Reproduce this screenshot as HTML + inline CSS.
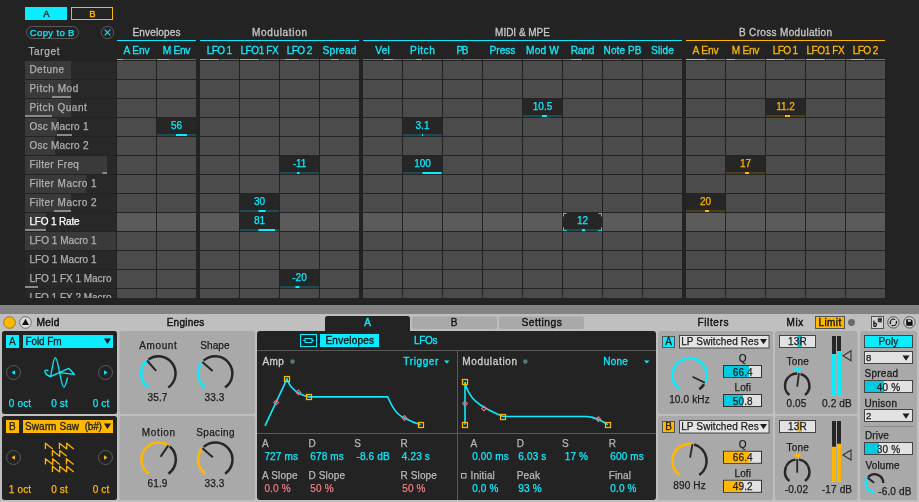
<!DOCTYPE html>
<html><head><meta charset="utf-8"><style>
html,body{margin:0;padding:0;background:#202020;width:919px;height:502px;overflow:hidden}
svg{display:block;will-change:transform}
text{font-family:"Liberation Sans", sans-serif}
.m{letter-spacing:0.15px}
</style></head><body>
<svg width="919" height="502" viewBox="0 0 919 502">
<rect x="0" y="0" width="919" height="305" fill="#232323" />
<rect x="25" y="7" width="42" height="13" fill="#0aecff" />
<text x="46.3" y="16.9" font-size="9.5" fill="#1a1a1a" stroke="#1a1a1a" stroke-width="0.35" text-anchor="middle" >A</text>
<rect x="71.5" y="7.5" width="41" height="12" fill="none" stroke="#ffb700" stroke-width="1"/>
<text x="92.3" y="16.9" font-size="9.5" fill="#ffb700" stroke="#ffb700" stroke-width="0.35" text-anchor="middle" >B</text>
<rect x="26.5" y="26.5" width="52" height="12" fill="none" rx="6" stroke="#5a5a5a" stroke-width="1"/>
<text x="52.1" y="35.8" font-size="9.6" fill="#0aecff" stroke="#0aecff" stroke-width="0.25" text-anchor="middle"  textLength="44.6" lengthAdjust="spacing">Copy to B</text>
<circle cx="107.5" cy="32.5" r="6.2" fill="none" stroke="#5a5a5a" stroke-width="1"/>
<path d="M104.7 29.7 L110.3 35.3 M110.3 29.7 L104.7 35.3" stroke="#0aecff" stroke-width="1.1" fill="none" />
<text x="28.4" y="55" font-size="10" fill="#b4b4b4" stroke="#b4b4b4" stroke-width="0.25" text-anchor="start"  textLength="31.2" lengthAdjust="spacing">Target</text>
<rect x="117" y="40" width="79" height="1" fill="#0aecff" />
<text x="156.5" y="36" font-size="10" fill="#c8c8c8" stroke="#c8c8c8" stroke-width="0.3" text-anchor="middle"  textLength="48.1" lengthAdjust="spacing">Envelopes</text>
<text x="136.5" y="54" font-size="10.2" fill="#0aecff" stroke="#0aecff" stroke-width="0.3" text-anchor="middle"  textLength="26.2" lengthAdjust="spacing">A Env</text>
<text x="176.5" y="54" font-size="10.2" fill="#0aecff" stroke="#0aecff" stroke-width="0.3" text-anchor="middle"  textLength="27.7" lengthAdjust="spacing">M Env</text>
<rect x="200" y="40" width="159" height="1" fill="#0aecff" />
<text x="279.5" y="36" font-size="10" fill="#c8c8c8" stroke="#c8c8c8" stroke-width="0.3" text-anchor="middle"  textLength="54.9" lengthAdjust="spacing">Modulation</text>
<text x="219.5" y="54" font-size="10" fill="#0aecff" stroke="#0aecff" stroke-width="0.3" text-anchor="middle"  textLength="25.3" lengthAdjust="spacing">LFO 1</text>
<text x="259.5" y="54" font-size="10" fill="#0aecff" stroke="#0aecff" stroke-width="0.3" text-anchor="middle"  textLength="38.1" lengthAdjust="spacing">LFO1 FX</text>
<text x="299.5" y="54" font-size="10" fill="#0aecff" stroke="#0aecff" stroke-width="0.3" text-anchor="middle"  textLength="25.5" lengthAdjust="spacing">LFO 2</text>
<text x="339.5" y="54" font-size="10.2" fill="#0aecff" stroke="#0aecff" stroke-width="0.3" text-anchor="middle"  textLength="34" lengthAdjust="spacing">Spread</text>
<rect x="363" y="40" width="319" height="1" fill="#0aecff" />
<text x="522.5" y="36" font-size="10" fill="#c8c8c8" stroke="#c8c8c8" stroke-width="0.3" text-anchor="middle"  textLength="54.8" lengthAdjust="spacing">MIDI &amp; MPE</text>
<text x="382.5" y="54" font-size="10.2" fill="#0aecff" stroke="#0aecff" stroke-width="0.3" text-anchor="middle"  textLength="14.4" lengthAdjust="spacing">Vel</text>
<text x="422.5" y="54" font-size="10.2" fill="#0aecff" stroke="#0aecff" stroke-width="0.3" text-anchor="middle"  textLength="24.8" lengthAdjust="spacing">Pitch</text>
<text x="462.5" y="54" font-size="10" fill="#0aecff" stroke="#0aecff" stroke-width="0.3" text-anchor="middle"  textLength="12" lengthAdjust="spacing">PB</text>
<text x="502.5" y="54" font-size="10.2" fill="#0aecff" stroke="#0aecff" stroke-width="0.3" text-anchor="middle"  textLength="25.9" lengthAdjust="spacing">Press</text>
<text x="542.5" y="54" font-size="10.2" fill="#0aecff" stroke="#0aecff" stroke-width="0.3" text-anchor="middle"  textLength="32.9" lengthAdjust="spacing">Mod W</text>
<text x="582.5" y="54" font-size="10.2" fill="#0aecff" stroke="#0aecff" stroke-width="0.3" text-anchor="middle"  textLength="23.7" lengthAdjust="spacing">Rand</text>
<text x="622.5" y="54" font-size="10" fill="#0aecff" stroke="#0aecff" stroke-width="0.3" text-anchor="middle"  textLength="37.8" lengthAdjust="spacing">Note PB</text>
<text x="662.5" y="54" font-size="10.2" fill="#0aecff" stroke="#0aecff" stroke-width="0.3" text-anchor="middle"  textLength="23" lengthAdjust="spacing">Slide</text>
<rect x="686" y="40" width="199" height="1" fill="#ffb700" />
<text x="785.5" y="36" font-size="10" fill="#c8c8c8" stroke="#c8c8c8" stroke-width="0.3" text-anchor="middle"  textLength="93" lengthAdjust="spacing">B Cross Modulation</text>
<text x="705.5" y="54" font-size="10.2" fill="#ffb700" stroke="#ffb700" stroke-width="0.3" text-anchor="middle"  textLength="26.2" lengthAdjust="spacing">A Env</text>
<text x="745.5" y="54" font-size="10.2" fill="#ffb700" stroke="#ffb700" stroke-width="0.3" text-anchor="middle"  textLength="27.7" lengthAdjust="spacing">M Env</text>
<text x="785.5" y="54" font-size="10" fill="#ffb700" stroke="#ffb700" stroke-width="0.3" text-anchor="middle"  textLength="25.3" lengthAdjust="spacing">LFO 1</text>
<text x="825.5" y="54" font-size="10" fill="#ffb700" stroke="#ffb700" stroke-width="0.3" text-anchor="middle"  textLength="38.1" lengthAdjust="spacing">LFO1 FX</text>
<text x="865.5" y="54" font-size="10" fill="#ffb700" stroke="#ffb700" stroke-width="0.3" text-anchor="middle"  textLength="25.5" lengthAdjust="spacing">LFO 2</text>
<rect x="117" y="59" width="39" height="1" fill="#0f919c" />
<rect x="117" y="59" width="6" height="1" fill="#0aecff" />
<rect x="157" y="59" width="39" height="1" fill="#0f919c" />
<rect x="157" y="59" width="12" height="1" fill="#0aecff" />
<rect x="200" y="59" width="19" height="1" fill="#0f919c" />
<rect x="220" y="59" width="19" height="1" fill="#0f919c" />
<rect x="200" y="59" width="19" height="1" fill="#0aecff" />
<rect x="240" y="59" width="19" height="1" fill="#0f919c" />
<rect x="260" y="59" width="19" height="1" fill="#0f919c" />
<rect x="240" y="59" width="19" height="1" fill="#0aecff" />
<rect x="280" y="59" width="19" height="1" fill="#0f919c" />
<rect x="300" y="59" width="19" height="1" fill="#0f919c" />
<rect x="285" y="59" width="14" height="1" fill="#0aecff" />
<rect x="320" y="59" width="19" height="1" fill="#0f919c" />
<rect x="340" y="59" width="19" height="1" fill="#0f919c" />
<rect x="331" y="59" width="8" height="1" fill="#0aecff" />
<rect x="363" y="59" width="19" height="1" fill="#0f919c" />
<rect x="383" y="59" width="19" height="1" fill="#0f919c" />
<rect x="383" y="59" width="10" height="1" fill="#0aecff" />
<rect x="403" y="59" width="19" height="1" fill="#0f919c" />
<rect x="423" y="59" width="19" height="1" fill="#0f919c" />
<rect x="416" y="59" width="6" height="1" fill="#0aecff" />
<rect x="443" y="59" width="19" height="1" fill="#0f919c" />
<rect x="463" y="59" width="19" height="1" fill="#0f919c" />
<rect x="483" y="59" width="39" height="1" fill="#0f919c" />
<rect x="523" y="59" width="39" height="1" fill="#0f919c" />
<rect x="563" y="59" width="19" height="1" fill="#0f919c" />
<rect x="583" y="59" width="19" height="1" fill="#0f919c" />
<rect x="571" y="59" width="11" height="1" fill="#0aecff" />
<rect x="603" y="59" width="19" height="1" fill="#0f919c" />
<rect x="623" y="59" width="19" height="1" fill="#0f919c" />
<rect x="643" y="59" width="39" height="1" fill="#0f919c" />
<rect x="686" y="59" width="39" height="1" fill="#a8780a" />
<rect x="686" y="59" width="20" height="1" fill="#ffb700" />
<rect x="726" y="59" width="39" height="1" fill="#a8780a" />
<rect x="726" y="59" width="9" height="1" fill="#ffb700" />
<rect x="766" y="59" width="19" height="1" fill="#a8780a" />
<rect x="786" y="59" width="19" height="1" fill="#a8780a" />
<rect x="766" y="59" width="19" height="1" fill="#ffb700" />
<rect x="806" y="59" width="19" height="1" fill="#a8780a" />
<rect x="826" y="59" width="19" height="1" fill="#a8780a" />
<rect x="806" y="59" width="19" height="1" fill="#ffb700" />
<rect x="846" y="59" width="19" height="1" fill="#a8780a" />
<rect x="866" y="59" width="19" height="1" fill="#a8780a" />
<rect x="851" y="59" width="14" height="1" fill="#ffb700" />
<clipPath id="mc"><rect x="0" y="0" width="919" height="298"/></clipPath>
<g clip-path="url(#mc)">
<rect x="25" y="61" width="91" height="18" fill="#282828" />
<rect x="25" y="61" width="46" height="18" fill="#3a3a3a" />
<text x="29.4" y="73.2" font-size="10" fill="#b0b0b0" stroke="#b0b0b0" stroke-width="0.25" text-anchor="start"  textLength="34.7" lengthAdjust="spacing">Detune</text>
<rect x="117" y="61" width="39" height="18" fill="#4b4b4b" />
<rect x="157" y="61" width="39" height="18" fill="#4b4b4b" />
<rect x="200" y="61" width="39" height="18" fill="#4b4b4b" />
<rect x="240" y="61" width="39" height="18" fill="#4b4b4b" />
<rect x="280" y="61" width="39" height="18" fill="#4b4b4b" />
<rect x="320" y="61" width="39" height="18" fill="#4b4b4b" />
<rect x="363" y="61" width="39" height="18" fill="#4b4b4b" />
<rect x="403" y="61" width="39" height="18" fill="#4b4b4b" />
<rect x="443" y="61" width="39" height="18" fill="#4b4b4b" />
<rect x="483" y="61" width="39" height="18" fill="#4b4b4b" />
<rect x="523" y="61" width="39" height="18" fill="#4b4b4b" />
<rect x="563" y="61" width="39" height="18" fill="#4b4b4b" />
<rect x="603" y="61" width="39" height="18" fill="#4b4b4b" />
<rect x="643" y="61" width="39" height="18" fill="#4b4b4b" />
<rect x="686" y="61" width="39" height="18" fill="#4b4b4b" />
<rect x="726" y="61" width="39" height="18" fill="#4b4b4b" />
<rect x="766" y="61" width="39" height="18" fill="#4b4b4b" />
<rect x="806" y="61" width="39" height="18" fill="#4b4b4b" />
<rect x="846" y="61" width="39" height="18" fill="#4b4b4b" />
<rect x="25" y="80" width="91" height="18" fill="#282828" />
<rect x="25" y="80" width="46" height="18" fill="#3a3a3a" />
<rect x="52" y="96" width="19" height="2" fill="#8a8a8a" />
<text x="29.4" y="92.2" font-size="10" fill="#b0b0b0" stroke="#b0b0b0" stroke-width="0.25" text-anchor="start"  textLength="48.8" lengthAdjust="spacing">Pitch Mod</text>
<rect x="117" y="80" width="39" height="18" fill="#4b4b4b" />
<rect x="157" y="80" width="39" height="18" fill="#4b4b4b" />
<rect x="200" y="80" width="39" height="18" fill="#4b4b4b" />
<rect x="240" y="80" width="39" height="18" fill="#4b4b4b" />
<rect x="280" y="80" width="39" height="18" fill="#4b4b4b" />
<rect x="320" y="80" width="39" height="18" fill="#4b4b4b" />
<rect x="363" y="80" width="39" height="18" fill="#4b4b4b" />
<rect x="403" y="80" width="39" height="18" fill="#4b4b4b" />
<rect x="443" y="80" width="39" height="18" fill="#4b4b4b" />
<rect x="483" y="80" width="39" height="18" fill="#4b4b4b" />
<rect x="523" y="80" width="39" height="18" fill="#4b4b4b" />
<rect x="563" y="80" width="39" height="18" fill="#4b4b4b" />
<rect x="603" y="80" width="39" height="18" fill="#4b4b4b" />
<rect x="643" y="80" width="39" height="18" fill="#4b4b4b" />
<rect x="686" y="80" width="39" height="18" fill="#4b4b4b" />
<rect x="726" y="80" width="39" height="18" fill="#4b4b4b" />
<rect x="766" y="80" width="39" height="18" fill="#4b4b4b" />
<rect x="806" y="80" width="39" height="18" fill="#4b4b4b" />
<rect x="846" y="80" width="39" height="18" fill="#4b4b4b" />
<rect x="25" y="99" width="91" height="18" fill="#282828" />
<rect x="25" y="99" width="46" height="18" fill="#3a3a3a" />
<rect x="25" y="115" width="27" height="2" fill="#8a8a8a" />
<text x="29.4" y="111.2" font-size="10" fill="#b0b0b0" stroke="#b0b0b0" stroke-width="0.25" text-anchor="start"  textLength="57.4" lengthAdjust="spacing">Pitch Quant</text>
<rect x="117" y="99" width="39" height="18" fill="#4b4b4b" />
<rect x="157" y="99" width="39" height="18" fill="#4b4b4b" />
<rect x="200" y="99" width="39" height="18" fill="#4b4b4b" />
<rect x="240" y="99" width="39" height="18" fill="#4b4b4b" />
<rect x="280" y="99" width="39" height="18" fill="#4b4b4b" />
<rect x="320" y="99" width="39" height="18" fill="#4b4b4b" />
<rect x="363" y="99" width="39" height="18" fill="#4b4b4b" />
<rect x="403" y="99" width="39" height="18" fill="#4b4b4b" />
<rect x="443" y="99" width="39" height="18" fill="#4b4b4b" />
<rect x="483" y="99" width="39" height="18" fill="#4b4b4b" />
<rect x="523" y="99" width="39" height="18" fill="#262626" />
<rect x="523" y="115" width="39" height="2" fill="#1d4d53" />
<rect x="542" y="115" width="5" height="2" fill="#0aecff" />
<text x="542.5" y="110.1" font-size="10" fill="#0aecff" stroke="#0aecff" stroke-width="0.25" text-anchor="middle" >10.5</text>
<rect x="563" y="99" width="39" height="18" fill="#4b4b4b" />
<rect x="603" y="99" width="39" height="18" fill="#4b4b4b" />
<rect x="643" y="99" width="39" height="18" fill="#4b4b4b" />
<rect x="686" y="99" width="39" height="18" fill="#4b4b4b" />
<rect x="726" y="99" width="39" height="18" fill="#4b4b4b" />
<rect x="766" y="99" width="39" height="18" fill="#262626" />
<rect x="766" y="115" width="39" height="2" fill="#4e3e1a" />
<rect x="785" y="115" width="5" height="2" fill="#ffb700" />
<text x="785.5" y="110.1" font-size="10" fill="#ffb700" stroke="#ffb700" stroke-width="0.25" text-anchor="middle" >11.2</text>
<rect x="806" y="99" width="39" height="18" fill="#4b4b4b" />
<rect x="846" y="99" width="39" height="18" fill="#4b4b4b" />
<rect x="25" y="118" width="91" height="18" fill="#282828" />
<rect x="25" y="118" width="32" height="18" fill="#3a3a3a" />
<rect x="57" y="134" width="15" height="2" fill="#8a8a8a" />
<text x="29.4" y="130.2" font-size="10" fill="#b0b0b0" stroke="#b0b0b0" stroke-width="0.25" text-anchor="start"  textLength="59.1" lengthAdjust="spacing">Osc Macro 1</text>
<rect x="117" y="118" width="39" height="18" fill="#4b4b4b" />
<rect x="157" y="118" width="39" height="18" fill="#262626" />
<rect x="157" y="134" width="39" height="2" fill="#1d4d53" />
<rect x="176" y="134" width="11" height="2" fill="#0aecff" />
<text x="176.5" y="129.1" font-size="10" fill="#0aecff" stroke="#0aecff" stroke-width="0.25" text-anchor="middle" >56</text>
<rect x="200" y="118" width="39" height="18" fill="#4b4b4b" />
<rect x="240" y="118" width="39" height="18" fill="#4b4b4b" />
<rect x="280" y="118" width="39" height="18" fill="#4b4b4b" />
<rect x="320" y="118" width="39" height="18" fill="#4b4b4b" />
<rect x="363" y="118" width="39" height="18" fill="#4b4b4b" />
<rect x="403" y="118" width="39" height="18" fill="#262626" />
<rect x="403" y="134" width="39" height="2" fill="#1d4d53" />
<rect x="422" y="134" width="1" height="2" fill="#0aecff" />
<text x="422.5" y="129.1" font-size="10" fill="#0aecff" stroke="#0aecff" stroke-width="0.25" text-anchor="middle" >3.1</text>
<rect x="443" y="118" width="39" height="18" fill="#4b4b4b" />
<rect x="483" y="118" width="39" height="18" fill="#4b4b4b" />
<rect x="523" y="118" width="39" height="18" fill="#4b4b4b" />
<rect x="563" y="118" width="39" height="18" fill="#4b4b4b" />
<rect x="603" y="118" width="39" height="18" fill="#4b4b4b" />
<rect x="643" y="118" width="39" height="18" fill="#4b4b4b" />
<rect x="686" y="118" width="39" height="18" fill="#4b4b4b" />
<rect x="726" y="118" width="39" height="18" fill="#4b4b4b" />
<rect x="766" y="118" width="39" height="18" fill="#4b4b4b" />
<rect x="806" y="118" width="39" height="18" fill="#4b4b4b" />
<rect x="846" y="118" width="39" height="18" fill="#4b4b4b" />
<rect x="25" y="137" width="91" height="18" fill="#282828" />
<rect x="25" y="137" width="30" height="18" fill="#3a3a3a" />
<text x="29.4" y="149.2" font-size="10" fill="#b0b0b0" stroke="#b0b0b0" stroke-width="0.25" text-anchor="start"  textLength="59.1" lengthAdjust="spacing">Osc Macro 2</text>
<rect x="117" y="137" width="39" height="18" fill="#4b4b4b" />
<rect x="157" y="137" width="39" height="18" fill="#4b4b4b" />
<rect x="200" y="137" width="39" height="18" fill="#4b4b4b" />
<rect x="240" y="137" width="39" height="18" fill="#4b4b4b" />
<rect x="280" y="137" width="39" height="18" fill="#4b4b4b" />
<rect x="320" y="137" width="39" height="18" fill="#4b4b4b" />
<rect x="363" y="137" width="39" height="18" fill="#4b4b4b" />
<rect x="403" y="137" width="39" height="18" fill="#4b4b4b" />
<rect x="443" y="137" width="39" height="18" fill="#4b4b4b" />
<rect x="483" y="137" width="39" height="18" fill="#4b4b4b" />
<rect x="523" y="137" width="39" height="18" fill="#4b4b4b" />
<rect x="563" y="137" width="39" height="18" fill="#4b4b4b" />
<rect x="603" y="137" width="39" height="18" fill="#4b4b4b" />
<rect x="643" y="137" width="39" height="18" fill="#4b4b4b" />
<rect x="686" y="137" width="39" height="18" fill="#4b4b4b" />
<rect x="726" y="137" width="39" height="18" fill="#4b4b4b" />
<rect x="766" y="137" width="39" height="18" fill="#4b4b4b" />
<rect x="806" y="137" width="39" height="18" fill="#4b4b4b" />
<rect x="846" y="137" width="39" height="18" fill="#4b4b4b" />
<rect x="25" y="156" width="91" height="18" fill="#282828" />
<rect x="25" y="156" width="82" height="18" fill="#3a3a3a" />
<rect x="102.5" y="172" width="4.5" height="2" fill="#8a8a8a" />
<text x="29.4" y="168.2" font-size="10" fill="#b0b0b0" stroke="#b0b0b0" stroke-width="0.25" text-anchor="start"  textLength="49.5" lengthAdjust="spacing">Filter Freq</text>
<rect x="117" y="156" width="39" height="18" fill="#4b4b4b" />
<rect x="157" y="156" width="39" height="18" fill="#4b4b4b" />
<rect x="200" y="156" width="39" height="18" fill="#4b4b4b" />
<rect x="240" y="156" width="39" height="18" fill="#4b4b4b" />
<rect x="280" y="156" width="39" height="18" fill="#262626" />
<rect x="280" y="172" width="39" height="2" fill="#1d4d53" />
<rect x="297" y="172" width="2.5" height="2" fill="#0aecff" />
<text x="299.5" y="167.1" font-size="10" fill="#0aecff" stroke="#0aecff" stroke-width="0.25" text-anchor="middle" >-11</text>
<rect x="320" y="156" width="39" height="18" fill="#4b4b4b" />
<rect x="363" y="156" width="39" height="18" fill="#4b4b4b" />
<rect x="403" y="156" width="39" height="18" fill="#262626" />
<rect x="403" y="172" width="39" height="2" fill="#1d4d53" />
<rect x="422.5" y="172" width="19.0" height="2" fill="#0aecff" />
<text x="422.5" y="167.1" font-size="10" fill="#0aecff" stroke="#0aecff" stroke-width="0.25" text-anchor="middle" >100</text>
<rect x="443" y="156" width="39" height="18" fill="#4b4b4b" />
<rect x="483" y="156" width="39" height="18" fill="#4b4b4b" />
<rect x="523" y="156" width="39" height="18" fill="#4b4b4b" />
<rect x="563" y="156" width="39" height="18" fill="#4b4b4b" />
<rect x="603" y="156" width="39" height="18" fill="#4b4b4b" />
<rect x="643" y="156" width="39" height="18" fill="#4b4b4b" />
<rect x="686" y="156" width="39" height="18" fill="#4b4b4b" />
<rect x="726" y="156" width="39" height="18" fill="#262626" />
<rect x="726" y="172" width="39" height="2" fill="#4e3e1a" />
<rect x="745" y="172" width="4" height="2" fill="#ffb700" />
<text x="745.5" y="167.1" font-size="10" fill="#ffb700" stroke="#ffb700" stroke-width="0.25" text-anchor="middle" >17</text>
<rect x="766" y="156" width="39" height="18" fill="#4b4b4b" />
<rect x="806" y="156" width="39" height="18" fill="#4b4b4b" />
<rect x="846" y="156" width="39" height="18" fill="#4b4b4b" />
<rect x="25" y="175" width="91" height="18" fill="#282828" />
<rect x="25" y="175" width="61" height="18" fill="#3a3a3a" />
<text x="29.4" y="187.2" font-size="10" fill="#b0b0b0" stroke="#b0b0b0" stroke-width="0.25" text-anchor="start"  textLength="67.1" lengthAdjust="spacing">Filter Macro 1</text>
<rect x="117" y="175" width="39" height="18" fill="#4b4b4b" />
<rect x="157" y="175" width="39" height="18" fill="#4b4b4b" />
<rect x="200" y="175" width="39" height="18" fill="#4b4b4b" />
<rect x="240" y="175" width="39" height="18" fill="#4b4b4b" />
<rect x="280" y="175" width="39" height="18" fill="#4b4b4b" />
<rect x="320" y="175" width="39" height="18" fill="#4b4b4b" />
<rect x="363" y="175" width="39" height="18" fill="#4b4b4b" />
<rect x="403" y="175" width="39" height="18" fill="#4b4b4b" />
<rect x="443" y="175" width="39" height="18" fill="#4b4b4b" />
<rect x="483" y="175" width="39" height="18" fill="#4b4b4b" />
<rect x="523" y="175" width="39" height="18" fill="#4b4b4b" />
<rect x="563" y="175" width="39" height="18" fill="#4b4b4b" />
<rect x="603" y="175" width="39" height="18" fill="#4b4b4b" />
<rect x="643" y="175" width="39" height="18" fill="#4b4b4b" />
<rect x="686" y="175" width="39" height="18" fill="#4b4b4b" />
<rect x="726" y="175" width="39" height="18" fill="#4b4b4b" />
<rect x="766" y="175" width="39" height="18" fill="#4b4b4b" />
<rect x="806" y="175" width="39" height="18" fill="#4b4b4b" />
<rect x="846" y="175" width="39" height="18" fill="#4b4b4b" />
<rect x="25" y="194" width="91" height="18" fill="#282828" />
<rect x="25" y="194" width="46" height="18" fill="#3a3a3a" />
<rect x="54" y="210" width="17" height="2" fill="#8a8a8a" />
<text x="29.4" y="206.2" font-size="10" fill="#b0b0b0" stroke="#b0b0b0" stroke-width="0.25" text-anchor="start"  textLength="67.1" lengthAdjust="spacing">Filter Macro 2</text>
<rect x="117" y="194" width="39" height="18" fill="#4b4b4b" />
<rect x="157" y="194" width="39" height="18" fill="#4b4b4b" />
<rect x="200" y="194" width="39" height="18" fill="#4b4b4b" />
<rect x="240" y="194" width="39" height="18" fill="#262626" />
<rect x="240" y="210" width="39" height="2" fill="#1d4d53" />
<rect x="258.5" y="210" width="7.0" height="2" fill="#0aecff" />
<text x="259.5" y="205.1" font-size="10" fill="#0aecff" stroke="#0aecff" stroke-width="0.25" text-anchor="middle" >30</text>
<rect x="280" y="194" width="39" height="18" fill="#4b4b4b" />
<rect x="320" y="194" width="39" height="18" fill="#4b4b4b" />
<rect x="363" y="194" width="39" height="18" fill="#4b4b4b" />
<rect x="403" y="194" width="39" height="18" fill="#4b4b4b" />
<rect x="443" y="194" width="39" height="18" fill="#4b4b4b" />
<rect x="483" y="194" width="39" height="18" fill="#4b4b4b" />
<rect x="523" y="194" width="39" height="18" fill="#4b4b4b" />
<rect x="563" y="194" width="39" height="18" fill="#4b4b4b" />
<rect x="603" y="194" width="39" height="18" fill="#4b4b4b" />
<rect x="643" y="194" width="39" height="18" fill="#4b4b4b" />
<rect x="686" y="194" width="39" height="18" fill="#262626" />
<rect x="686" y="210" width="39" height="2" fill="#4e3e1a" />
<rect x="705" y="210" width="4" height="2" fill="#ffb700" />
<text x="705.5" y="205.1" font-size="10" fill="#ffb700" stroke="#ffb700" stroke-width="0.25" text-anchor="middle" >20</text>
<rect x="726" y="194" width="39" height="18" fill="#4b4b4b" />
<rect x="766" y="194" width="39" height="18" fill="#4b4b4b" />
<rect x="806" y="194" width="39" height="18" fill="#4b4b4b" />
<rect x="846" y="194" width="39" height="18" fill="#4b4b4b" />
<rect x="25" y="213" width="91" height="18" fill="#282828" />
<rect x="25" y="213" width="21" height="18" fill="#3a3a3a" />
<rect x="25" y="229" width="21" height="2" fill="#8a8a8a" />
<text x="29.4" y="225.2" font-size="10" fill="#ffffff" stroke="#ffffff" stroke-width="0.25" text-anchor="start"  textLength="50.2" lengthAdjust="spacing">LFO 1 Rate</text>
<rect x="117" y="213" width="39" height="18" fill="#5b5b5b" />
<rect x="157" y="213" width="39" height="18" fill="#5b5b5b" />
<rect x="200" y="213" width="39" height="18" fill="#5b5b5b" />
<rect x="240" y="213" width="39" height="18" fill="#262626" />
<rect x="240" y="229" width="39" height="2" fill="#1d4d53" />
<rect x="258.5" y="229" width="16.5" height="2" fill="#0aecff" />
<text x="259.5" y="224.1" font-size="10" fill="#0aecff" stroke="#0aecff" stroke-width="0.25" text-anchor="middle" >81</text>
<rect x="280" y="213" width="39" height="18" fill="#5b5b5b" />
<rect x="320" y="213" width="39" height="18" fill="#5b5b5b" />
<rect x="363" y="213" width="39" height="18" fill="#5b5b5b" />
<rect x="403" y="213" width="39" height="18" fill="#5b5b5b" />
<rect x="443" y="213" width="39" height="18" fill="#5b5b5b" />
<rect x="483" y="213" width="39" height="18" fill="#5b5b5b" />
<rect x="523" y="213" width="39" height="18" fill="#5b5b5b" />
<rect x="563" y="213" width="39" height="18" fill="#262626" />
<rect x="563" y="229" width="39" height="2" fill="#1d4d53" />
<rect x="582" y="229" width="3" height="2" fill="#0aecff" />
<text x="582.5" y="224.1" font-size="10" fill="#0aecff" stroke="#0aecff" stroke-width="0.25" text-anchor="middle" >12</text>
<rect x="603" y="213" width="39" height="18" fill="#5b5b5b" />
<rect x="643" y="213" width="39" height="18" fill="#5b5b5b" />
<rect x="686" y="213" width="39" height="18" fill="#5b5b5b" />
<rect x="726" y="213" width="39" height="18" fill="#5b5b5b" />
<rect x="766" y="213" width="39" height="18" fill="#5b5b5b" />
<rect x="806" y="213" width="39" height="18" fill="#5b5b5b" />
<rect x="846" y="213" width="39" height="18" fill="#5b5b5b" />
<rect x="25" y="232" width="91" height="18" fill="#282828" />
<rect x="25" y="232" width="91" height="18" fill="#3a3a3a" />
<text x="29.4" y="244.2" font-size="10" fill="#b0b0b0" stroke="#b0b0b0" stroke-width="0.25" text-anchor="start"  textLength="67.1" lengthAdjust="spacing">LFO 1 Macro 1</text>
<rect x="117" y="232" width="39" height="18" fill="#4b4b4b" />
<rect x="157" y="232" width="39" height="18" fill="#4b4b4b" />
<rect x="200" y="232" width="39" height="18" fill="#4b4b4b" />
<rect x="240" y="232" width="39" height="18" fill="#4b4b4b" />
<rect x="280" y="232" width="39" height="18" fill="#4b4b4b" />
<rect x="320" y="232" width="39" height="18" fill="#4b4b4b" />
<rect x="363" y="232" width="39" height="18" fill="#4b4b4b" />
<rect x="403" y="232" width="39" height="18" fill="#4b4b4b" />
<rect x="443" y="232" width="39" height="18" fill="#4b4b4b" />
<rect x="483" y="232" width="39" height="18" fill="#4b4b4b" />
<rect x="523" y="232" width="39" height="18" fill="#4b4b4b" />
<rect x="563" y="232" width="39" height="18" fill="#4b4b4b" />
<rect x="603" y="232" width="39" height="18" fill="#4b4b4b" />
<rect x="643" y="232" width="39" height="18" fill="#4b4b4b" />
<rect x="686" y="232" width="39" height="18" fill="#4b4b4b" />
<rect x="726" y="232" width="39" height="18" fill="#4b4b4b" />
<rect x="766" y="232" width="39" height="18" fill="#4b4b4b" />
<rect x="806" y="232" width="39" height="18" fill="#4b4b4b" />
<rect x="846" y="232" width="39" height="18" fill="#4b4b4b" />
<rect x="25" y="251" width="91" height="18" fill="#282828" />
<text x="29.4" y="263.2" font-size="10" fill="#b0b0b0" stroke="#b0b0b0" stroke-width="0.25" text-anchor="start"  textLength="67.1" lengthAdjust="spacing">LFO 1 Macro 1</text>
<rect x="117" y="251" width="39" height="18" fill="#4b4b4b" />
<rect x="157" y="251" width="39" height="18" fill="#4b4b4b" />
<rect x="200" y="251" width="39" height="18" fill="#4b4b4b" />
<rect x="240" y="251" width="39" height="18" fill="#4b4b4b" />
<rect x="280" y="251" width="39" height="18" fill="#4b4b4b" />
<rect x="320" y="251" width="39" height="18" fill="#4b4b4b" />
<rect x="363" y="251" width="39" height="18" fill="#4b4b4b" />
<rect x="403" y="251" width="39" height="18" fill="#4b4b4b" />
<rect x="443" y="251" width="39" height="18" fill="#4b4b4b" />
<rect x="483" y="251" width="39" height="18" fill="#4b4b4b" />
<rect x="523" y="251" width="39" height="18" fill="#4b4b4b" />
<rect x="563" y="251" width="39" height="18" fill="#4b4b4b" />
<rect x="603" y="251" width="39" height="18" fill="#4b4b4b" />
<rect x="643" y="251" width="39" height="18" fill="#4b4b4b" />
<rect x="686" y="251" width="39" height="18" fill="#4b4b4b" />
<rect x="726" y="251" width="39" height="18" fill="#4b4b4b" />
<rect x="766" y="251" width="39" height="18" fill="#4b4b4b" />
<rect x="806" y="251" width="39" height="18" fill="#4b4b4b" />
<rect x="846" y="251" width="39" height="18" fill="#4b4b4b" />
<rect x="25" y="270" width="91" height="18" fill="#282828" />
<rect x="25" y="286" width="13" height="2" fill="#8a8a8a" />
<text x="29.4" y="282.2" font-size="10" fill="#b0b0b0" stroke="#b0b0b0" stroke-width="0.25" text-anchor="start"  textLength="82.1" lengthAdjust="spacing">LFO 1 FX 1 Macro</text>
<rect x="117" y="270" width="39" height="18" fill="#4b4b4b" />
<rect x="157" y="270" width="39" height="18" fill="#4b4b4b" />
<rect x="200" y="270" width="39" height="18" fill="#4b4b4b" />
<rect x="240" y="270" width="39" height="18" fill="#4b4b4b" />
<rect x="280" y="270" width="39" height="18" fill="#262626" />
<rect x="280" y="286" width="39" height="2" fill="#1d4d53" />
<rect x="295.5" y="286" width="4.0" height="2" fill="#0aecff" />
<text x="299.5" y="281.1" font-size="10" fill="#0aecff" stroke="#0aecff" stroke-width="0.25" text-anchor="middle" >-20</text>
<rect x="320" y="270" width="39" height="18" fill="#4b4b4b" />
<rect x="363" y="270" width="39" height="18" fill="#4b4b4b" />
<rect x="403" y="270" width="39" height="18" fill="#4b4b4b" />
<rect x="443" y="270" width="39" height="18" fill="#4b4b4b" />
<rect x="483" y="270" width="39" height="18" fill="#4b4b4b" />
<rect x="523" y="270" width="39" height="18" fill="#4b4b4b" />
<rect x="563" y="270" width="39" height="18" fill="#4b4b4b" />
<rect x="603" y="270" width="39" height="18" fill="#4b4b4b" />
<rect x="643" y="270" width="39" height="18" fill="#4b4b4b" />
<rect x="686" y="270" width="39" height="18" fill="#4b4b4b" />
<rect x="726" y="270" width="39" height="18" fill="#4b4b4b" />
<rect x="766" y="270" width="39" height="18" fill="#4b4b4b" />
<rect x="806" y="270" width="39" height="18" fill="#4b4b4b" />
<rect x="846" y="270" width="39" height="18" fill="#4b4b4b" />
<rect x="25" y="289" width="91" height="18" fill="#282828" />
<text x="29.4" y="301.2" font-size="10" fill="#b0b0b0" stroke="#b0b0b0" stroke-width="0.25" text-anchor="start"  textLength="82.1" lengthAdjust="spacing">LFO 1 FX 2 Macro</text>
<rect x="117" y="289" width="39" height="18" fill="#4b4b4b" />
<rect x="157" y="289" width="39" height="18" fill="#4b4b4b" />
<rect x="200" y="289" width="39" height="18" fill="#4b4b4b" />
<rect x="240" y="289" width="39" height="18" fill="#4b4b4b" />
<rect x="280" y="289" width="39" height="18" fill="#4b4b4b" />
<rect x="320" y="289" width="39" height="18" fill="#4b4b4b" />
<rect x="363" y="289" width="39" height="18" fill="#4b4b4b" />
<rect x="403" y="289" width="39" height="18" fill="#4b4b4b" />
<rect x="443" y="289" width="39" height="18" fill="#4b4b4b" />
<rect x="483" y="289" width="39" height="18" fill="#4b4b4b" />
<rect x="523" y="289" width="39" height="18" fill="#4b4b4b" />
<rect x="563" y="289" width="39" height="18" fill="#4b4b4b" />
<rect x="603" y="289" width="39" height="18" fill="#4b4b4b" />
<rect x="643" y="289" width="39" height="18" fill="#4b4b4b" />
<rect x="686" y="289" width="39" height="18" fill="#4b4b4b" />
<rect x="726" y="289" width="39" height="18" fill="#4b4b4b" />
<rect x="766" y="289" width="39" height="18" fill="#4b4b4b" />
<rect x="806" y="289" width="39" height="18" fill="#4b4b4b" />
<rect x="846" y="289" width="39" height="18" fill="#4b4b4b" />
</g>
<path d="M563.5 216.5 V213.5 H566.5 M598.5 213.5 H601.5 V216.5 M563.5 227.5 V230.5 H566.5 M598.5 230.5 H601.5 V227.5" stroke="#0aecff" stroke-width="1" fill="none" />
<rect x="0" y="305" width="919" height="9" fill="#838383" />
<rect x="0" y="314" width="919" height="188" fill="#bfbfbf" />
<circle cx="9.5" cy="322.5" r="5.8" fill="#ffb700" stroke="#8a6a10" stroke-width="0.8"/>
<circle cx="25.5" cy="322.5" r="5.8" fill="#dcdcdc" stroke="#555" stroke-width="0.8"/>
<path d="M25.5 318.8 L29 325 L22 325 Z" stroke="none" stroke-width="1" fill="#111" />
<text x="36.5" y="326.3" font-size="10.2" fill="#111" stroke="#111" stroke-width="0.45" text-anchor="start"  textLength="22.9" lengthAdjust="spacing">Meld</text>
<text x="185.45" y="326.1" font-size="10" fill="#111" stroke="#111" stroke-width="0.4" text-anchor="middle"  textLength="37.5" lengthAdjust="spacing">Engines</text>
<text x="713" y="326.1" font-size="10" fill="#111" stroke="#111" stroke-width="0.4" text-anchor="middle"  textLength="31" lengthAdjust="spacing">Filters</text>
<text x="794.85" y="326.1" font-size="10" fill="#111" stroke="#111" stroke-width="0.4" text-anchor="middle"  textLength="16.9" lengthAdjust="spacing">Mix</text>
<path d="M325 331 V318.5 Q325 316 327.5 316 H407.5 Q410 316 410 318.5 V331 Z" stroke="none" stroke-width="1" fill="#232323" />
<text x="367.5" y="326.2" font-size="10" fill="#0aecff" stroke="#0aecff" stroke-width="0.4" text-anchor="middle" >A</text>
<rect x="412" y="316.5" width="85" height="12.5" fill="#a9a9a9" rx="2" />
<text x="454.2" y="326.2" font-size="10" fill="#111" stroke="#111" stroke-width="0.35" text-anchor="middle" >B</text>
<rect x="499" y="316.5" width="85" height="12.5" fill="#a9a9a9" rx="2" />
<text x="541.6" y="326.2" font-size="10.3" fill="#111" stroke="#111" stroke-width="0.35" text-anchor="middle"  textLength="40.4" lengthAdjust="spacing">Settings</text>
<rect x="815.5" y="316.5" width="29" height="12" fill="#ffb700" stroke="#555" stroke-width="1"/>
<text x="829.9" y="326.1" font-size="10" fill="#111" stroke="#111" stroke-width="0.35" text-anchor="middle"  textLength="22.6" lengthAdjust="spacing">Limit</text>
<circle cx="851.5" cy="322.5" r="3.4" fill="#6a6a6a"/>
<rect x="871.5" y="316.5" width="12" height="12" fill="#d4d4d4" stroke="#555" stroke-width="1"/>
<path d="M873.9 320.4 V326.4 M873.9 323.6 C875.3 322.6 876.6 323.4 876.4 324.9 C876.2 326.2 875 326.6 873.9 326.4" stroke="#111" stroke-width="1.2" fill="none" />
<path d="M879 317.7 V322.6 M880.9 317.7 V322.6 M877.7 319.2 H882 M877.7 321 H882" stroke="#111" stroke-width="1" fill="none" />
<circle cx="893.4" cy="322.4" r="5.7" fill="#d0d0d0" stroke="#555" stroke-width="1"/>
<path d="M890.4 323.6 A3.3 3.3 0 0 1 895.2 319.6 M896.4 321.2 A3.3 3.3 0 0 1 891.6 325.2" stroke="#111" stroke-width="1.1" fill="none" />
<path d="M889.3 322.4 L891.5 322.4 L890.4 324.4 Z M897.5 322.4 L895.3 322.4 L896.4 320.4 Z" stroke="none" stroke-width="1" fill="#111" />
<circle cx="909.4" cy="322.4" r="5.7" fill="#d0d0d0" stroke="#555" stroke-width="1"/>
<path d="M906.2 319.2 H911 L912.6 320.8 V325.7 H906.2 Z" stroke="none" stroke-width="1" fill="#111" />
<rect x="907.9" y="319.8" width="2.9" height="2" fill="#d0d0d0" />
<rect x="2" y="331" width="115" height="83" fill="#232323" rx="2.5" />
<rect x="6" y="335" width="13" height="13" fill="#0aecff" />
<text x="12.5" y="345" font-size="10" fill="#1c1c1c" stroke="#1c1c1c" stroke-width="0.25" text-anchor="middle" class="m">A</text>
<rect x="23" y="335" width="90" height="13" fill="#0aecff" />
<text x="25.5" y="344.8" font-size="10" fill="#1c1c1c" stroke="#1c1c1c" stroke-width="0.3" text-anchor="start"  textLength="36" lengthAdjust="spacing">Fold Fm</text>
<path d="M104 338.5 H111 L107.5 344 Z" stroke="none" stroke-width="1" fill="#1c1c1c" />
<circle cx="13.5" cy="372.5" r="7" fill="none" stroke="#5a5a5a" stroke-width="1"/>
<circle cx="105.5" cy="372.5" r="7" fill="none" stroke="#5a5a5a" stroke-width="1"/>
<path d="M11.5 372.5 L15 370.2 V374.8 Z" stroke="none" stroke-width="1" fill="#0aecff" />
<path d="M107.5 372.5 L104 370.2 V374.8 Z" stroke="none" stroke-width="1" fill="#0aecff" />
<text x="20" y="407" font-size="10" fill="#0aecff" stroke="#0aecff" stroke-width="0.25" text-anchor="middle" class="m">0 oct</text>
<text x="59.5" y="407" font-size="10" fill="#0aecff" stroke="#0aecff" stroke-width="0.25" text-anchor="middle" class="m">0 st</text>
<text x="101" y="407" font-size="10" fill="#0aecff" stroke="#0aecff" stroke-width="0.25" text-anchor="middle" class="m">0 ct</text>
<rect x="2" y="416" width="115" height="84" fill="#232323" rx="2.5" />
<rect x="6" y="420" width="13" height="13" fill="#ffb700" />
<text x="12.5" y="430" font-size="10" fill="#1c1c1c" stroke="#1c1c1c" stroke-width="0.25" text-anchor="middle" class="m">B</text>
<rect x="23" y="420" width="90" height="13" fill="#ffb700" />
<text x="25" y="429.8" font-size="10" fill="#1c1c1c" stroke="#1c1c1c" stroke-width="0.3" text-anchor="start"  textLength="54" lengthAdjust="spacing">Swarm Saw</text>
<text x="84.8" y="429.8" font-size="10" fill="#1c1c1c" stroke="#1c1c1c" stroke-width="0.3" text-anchor="start"  textLength="17" lengthAdjust="spacing">(b#)</text>
<path d="M104 423.5 H111 L107.5 429 Z" stroke="none" stroke-width="1" fill="#1c1c1c" />
<circle cx="13.5" cy="457.5" r="7" fill="none" stroke="#5a5a5a" stroke-width="1"/>
<circle cx="105.5" cy="457.5" r="7" fill="none" stroke="#5a5a5a" stroke-width="1"/>
<path d="M11.5 457.5 L15 455.2 V459.8 Z" stroke="none" stroke-width="1" fill="#ffb700" />
<path d="M107.5 457.5 L104 455.2 V459.8 Z" stroke="none" stroke-width="1" fill="#ffb700" />
<text x="20" y="493" font-size="10" fill="#ffb700" stroke="#ffb700" stroke-width="0.25" text-anchor="middle" class="m">1 oct</text>
<text x="59.5" y="493" font-size="10" fill="#ffb700" stroke="#ffb700" stroke-width="0.25" text-anchor="middle" class="m">0 st</text>
<text x="101" y="493" font-size="10" fill="#ffb700" stroke="#ffb700" stroke-width="0.25" text-anchor="middle" class="m">0 ct</text>
<path d="M48.4 370.9 C46.5 369.6 44.3 370.2 44.9 372 C45.8 374 48 376 50.4 376.7 C52 371 53.4 357.6 55.2 357.6 C57 357.6 58.4 367 59.6 372.6 C61 380 62.4 387.1 63.9 387.1 C65.4 387.1 66.6 381 67.5 377.3" stroke="#0aecff" stroke-width="1.3" fill="none" />
<path d="M50.4 376.7 L68.7 368.3 L74.3 374.3 L59.6 372.6" stroke="#0aecff" stroke-width="1.3" fill="none" stroke-linejoin="round"/>
<path d="M45.4 448.9 V443.2 L52.699999999999996 448.9 M59.4 448.9 V443.2 L66.7 448.9 V443.2 L73.7 448.9 M52.4 456.3 V450.6 L59.699999999999996 456.3 V450.6 L66.7 456.3 M45.4 464.4 V458.7 L52.699999999999996 464.4 V458.7 L59.699999999999996 464.4 M66.4 464.4 V458.7 L73.7 464.4 M52.4 471.9 V466.2 L59.699999999999996 471.9 V466.2 L66.7 471.9 V466.2 L73.7 471.9" stroke="#ffb700" stroke-width="1.25" fill="none" stroke-linejoin="round"/>
<rect x="119.5" y="331" width="135.5" height="83" fill="#a9a9a9" rx="2.5" />
<rect x="119.5" y="416" width="135.5" height="84" fill="#a9a9a9" rx="2.5" />
<text x="158" y="348.8" font-size="10" fill="#1c1c1c" stroke="#1c1c1c" stroke-width="0.25" text-anchor="middle"  textLength="37.5" lengthAdjust="spacing">Amount</text>
<text x="214.9" y="348.8" font-size="10" fill="#1c1c1c" stroke="#1c1c1c" stroke-width="0.25" text-anchor="middle"  textLength="29.3" lengthAdjust="spacing">Shape</text>
<path d="M148.53 387.49 A17.2 17.2 0 0 1 147.00 360.52" stroke="#0aecff" stroke-width="2.5" fill="none" />
<path d="M148.41 359.40 A17.2 17.2 0 1 1 168.27 387.49" stroke="#262626" stroke-width="2.5" fill="none" />
<path d="M156.12 370.82 L147.00 360.52" stroke="#262626" stroke-width="2.0" fill="none" />
<path d="M205.33 387.49 A17.2 17.2 0 0 1 202.34 361.98" stroke="#0aecff" stroke-width="2.5" fill="none" />
<path d="M203.60 360.70 A17.2 17.2 0 1 1 225.07 387.49" stroke="#262626" stroke-width="2.5" fill="none" />
<path d="M212.63 371.12 L202.34 361.98" stroke="#262626" stroke-width="2.0" fill="none" />
<text x="157.5" y="400.5" font-size="10" fill="#1c1c1c" stroke="#1c1c1c" stroke-width="0.25" text-anchor="middle" class="m">35.7</text>
<text x="214.5" y="400.5" font-size="10" fill="#1c1c1c" stroke="#1c1c1c" stroke-width="0.25" text-anchor="middle" class="m">33.3</text>
<text x="158.4" y="435.5" font-size="10" fill="#1c1c1c" stroke="#1c1c1c" stroke-width="0.25" text-anchor="middle"  textLength="33.3" lengthAdjust="spacing">Motion</text>
<text x="215.4" y="435.5" font-size="10" fill="#1c1c1c" stroke="#1c1c1c" stroke-width="0.25" text-anchor="middle"  textLength="38.3" lengthAdjust="spacing">Spacing</text>
<path d="M148.73 473.69 A17.2 17.2 0 0 1 168.34 445.43" stroke="#ffb700" stroke-width="2.5" fill="none" />
<path d="M169.77 446.52 A17.2 17.2 0 0 1 168.47 473.69" stroke="#262626" stroke-width="2.5" fill="none" />
<path d="M160.55 456.77 L168.34 445.43" stroke="#262626" stroke-width="2.0" fill="none" />
<path d="M205.43 473.69 A17.2 17.2 0 0 1 202.44 448.18" stroke="#ffb700" stroke-width="2.5" fill="none" />
<path d="M203.70 446.90 A17.2 17.2 0 1 1 225.17 473.69" stroke="#262626" stroke-width="2.5" fill="none" />
<path d="M212.73 457.32 L202.44 448.18" stroke="#262626" stroke-width="2.0" fill="none" />
<text x="157.5" y="487.3" font-size="10" fill="#1c1c1c" stroke="#1c1c1c" stroke-width="0.25" text-anchor="middle" class="m">61.9</text>
<text x="214.5" y="487.3" font-size="10" fill="#1c1c1c" stroke="#1c1c1c" stroke-width="0.25" text-anchor="middle" class="m">33.3</text>
<rect x="257" y="331" width="399" height="169" fill="#232323" rx="3" />
<rect x="257" y="350" width="399" height="1" fill="#5a5a5a" />
<rect x="257" y="433" width="399" height="1" fill="#5a5a5a" />
<rect x="457" y="350" width="1" height="150" fill="#5a5a5a" />
<rect x="300.5" y="334.5" width="16" height="12" fill="none" stroke="#0aecff" stroke-width="1"/>
<path d="M303 340.5 H305 M312 340.5 H314" stroke="#0aecff" stroke-width="1" fill="none" />
<rect x="305" y="338.5" width="7" height="4" fill="none" stroke="#0aecff" stroke-width="1"/>
<rect x="320" y="334" width="59" height="13" fill="#0aecff" />
<text x="349.75" y="344.3" font-size="10" fill="#111" stroke="#111" stroke-width="0.35" text-anchor="middle"  textLength="48.7" lengthAdjust="spacing">Envelopes</text>
<text x="425.7" y="344.3" font-size="10" fill="#0aecff" stroke="#0aecff" stroke-width="0.3" text-anchor="middle"  textLength="23.4" lengthAdjust="spacing">LFOs</text>
<text x="262.4" y="365.3" font-size="10" fill="#d0d0d0" stroke="#d0d0d0" stroke-width="0.3" text-anchor="start"  textLength="21.4" lengthAdjust="spacing">Amp</text>
<circle cx="292.5" cy="361.6" r="2.3" fill="#4e7a7e"/>
<text x="403.3" y="365.3" font-size="10" fill="#0aecff" stroke="#0aecff" stroke-width="0.3" text-anchor="start"  textLength="35.1" lengthAdjust="spacing">Trigger</text>
<path d="M444 360.5 H449.5 L446.75 363.5 Z" stroke="none" stroke-width="1" fill="#0aecff" />
<path d="M265 425.8 L287 379 C290 388 297 394 308.9 396.9 L387.7 396.8 C391 404 395 414 404.5 418 C410 421 415 423 420.7 424.7" stroke="#0aecff" stroke-width="1.6" fill="none" />
<rect x="284.5" y="376.5" width="5" height="5" fill="none" stroke="#ffb700" stroke-width="1.25"/>
<rect x="306.5" y="394.5" width="5" height="5" fill="none" stroke="#ffb700" stroke-width="1.25"/>
<rect x="418.5" y="422.5" width="5" height="5" fill="none" stroke="#ffb700" stroke-width="1.25"/>
<path d="M276.2 400.0 L278.59999999999997 402.4 L276.2 404.79999999999995 L273.8 402.4 Z" stroke="#e8737e" stroke-width="1.05" fill="none" />
<path d="M298.5 390.0 L300.9 392.4 L298.5 394.79999999999995 L296.1 392.4 Z" stroke="#e8737e" stroke-width="1.05" fill="none" />
<path d="M404.5 415.6 L406.9 418 L404.5 420.4 L402.1 418 Z" stroke="#e8737e" stroke-width="1.05" fill="none" />
<text x="462.2" y="365.3" font-size="10" fill="#d0d0d0" stroke="#d0d0d0" stroke-width="0.3" text-anchor="start"  textLength="54.9" lengthAdjust="spacing">Modulation</text>
<circle cx="525.3" cy="361.6" r="2.3" fill="#4e7a7e"/>
<text x="603.3" y="365.3" font-size="10" fill="#0aecff" stroke="#0aecff" stroke-width="0.3" text-anchor="start"  textLength="24.6" lengthAdjust="spacing">None</text>
<path d="M644 360.5 H649.5 L646.75 363.5 Z" stroke="none" stroke-width="1" fill="#0aecff" />
<path d="M465 424.7 V381.9 C468 398 478 406 503 416.5 L586.6 416.5 C596 417 602 421 607.8 424.7" stroke="#0aecff" stroke-width="1.6" fill="none" />
<rect x="462.5" y="379.5" width="5" height="5" fill="none" stroke="#ffb700" stroke-width="1.25"/>
<rect x="462.5" y="422.5" width="5" height="5" fill="none" stroke="#ffb700" stroke-width="1.25"/>
<rect x="500.5" y="414.5" width="5" height="5" fill="none" stroke="#ffb700" stroke-width="1.25"/>
<rect x="605.5" y="422.5" width="5" height="5" fill="none" stroke="#ffb700" stroke-width="1.25"/>
<path d="M465 401.1 L467.4 403.5 L465 405.9 L462.6 403.5 Z" stroke="#e8737e" stroke-width="1.05" fill="none" />
<path d="M484 406.0 L486.4 408.4 L484 410.79999999999995 L481.6 408.4 Z" stroke="#e8737e" stroke-width="1.05" fill="none" />
<path d="M598.4 416.8 L600.8 419.2 L598.4 421.59999999999997 L596.0 419.2 Z" stroke="#e8737e" stroke-width="1.05" fill="none" />
<text x="262.1" y="446.8" font-size="10" fill="#b8b8b8" stroke="#b8b8b8" stroke-width="0.25" text-anchor="start" class="m">A</text>
<text x="264.4" y="460" font-size="10" fill="#0aecff" stroke="#0aecff" stroke-width="0.25" text-anchor="start" class="m">727 ms</text>
<text x="308.5" y="446.8" font-size="10" fill="#b8b8b8" stroke="#b8b8b8" stroke-width="0.25" text-anchor="start" class="m">D</text>
<text x="310.3" y="460" font-size="10" fill="#0aecff" stroke="#0aecff" stroke-width="0.25" text-anchor="start" class="m">678 ms</text>
<text x="354.3" y="446.8" font-size="10" fill="#b8b8b8" stroke="#b8b8b8" stroke-width="0.25" text-anchor="start" class="m">S</text>
<text x="356.5" y="460" font-size="10" fill="#0aecff" stroke="#0aecff" stroke-width="0.25" text-anchor="start" class="m">-8.6 dB</text>
<text x="400.4" y="446.8" font-size="10" fill="#b8b8b8" stroke="#b8b8b8" stroke-width="0.25" text-anchor="start" class="m">R</text>
<text x="401.8" y="460" font-size="10" fill="#0aecff" stroke="#0aecff" stroke-width="0.25" text-anchor="start" class="m">4.23 s</text>
<text x="262.1" y="478.8" font-size="10" fill="#b8b8b8" stroke="#b8b8b8" stroke-width="0.25" text-anchor="start" class="m">A Slope</text>
<text x="264.4" y="491.5" font-size="10" fill="#ec7b84" stroke="#ec7b84" stroke-width="0.25" text-anchor="start" class="m">0.0 %</text>
<text x="308.5" y="478.8" font-size="10" fill="#b8b8b8" stroke="#b8b8b8" stroke-width="0.25" text-anchor="start" class="m">D Slope</text>
<text x="310.3" y="491.5" font-size="10" fill="#ec7b84" stroke="#ec7b84" stroke-width="0.25" text-anchor="start" class="m">50 %</text>
<text x="400.4" y="478.8" font-size="10" fill="#b8b8b8" stroke="#b8b8b8" stroke-width="0.25" text-anchor="start" class="m">R Slope</text>
<text x="402.2" y="491.5" font-size="10" fill="#ec7b84" stroke="#ec7b84" stroke-width="0.25" text-anchor="start" class="m">50 %</text>
<text x="470.6" y="446.8" font-size="10" fill="#b8b8b8" stroke="#b8b8b8" stroke-width="0.25" text-anchor="start" class="m">A</text>
<text x="472.2" y="460" font-size="10" fill="#0aecff" stroke="#0aecff" stroke-width="0.25" text-anchor="start" class="m">0.00 ms</text>
<text x="516.7" y="446.8" font-size="10" fill="#b8b8b8" stroke="#b8b8b8" stroke-width="0.25" text-anchor="start" class="m">D</text>
<text x="518.3" y="460" font-size="10" fill="#0aecff" stroke="#0aecff" stroke-width="0.25" text-anchor="start" class="m">6.03 s</text>
<text x="561.9" y="446.8" font-size="10" fill="#b8b8b8" stroke="#b8b8b8" stroke-width="0.25" text-anchor="start" class="m">S</text>
<text x="564.7" y="460" font-size="10" fill="#0aecff" stroke="#0aecff" stroke-width="0.25" text-anchor="start" class="m">17 %</text>
<text x="608.7" y="446.8" font-size="10" fill="#b8b8b8" stroke="#b8b8b8" stroke-width="0.25" text-anchor="start" class="m">R</text>
<text x="610.3" y="460" font-size="10" fill="#0aecff" stroke="#0aecff" stroke-width="0.25" text-anchor="start" class="m">600 ms</text>
<text x="470.6" y="478.8" font-size="10" fill="#b8b8b8" stroke="#b8b8b8" stroke-width="0.25" text-anchor="start" class="m">Initial</text>
<text x="472.2" y="491.5" font-size="10" fill="#0aecff" stroke="#0aecff" stroke-width="0.25" text-anchor="start" class="m">0.0 %</text>
<text x="516.7" y="478.8" font-size="10" fill="#b8b8b8" stroke="#b8b8b8" stroke-width="0.25" text-anchor="start" class="m">Peak</text>
<text x="518.3" y="491.5" font-size="10" fill="#0aecff" stroke="#0aecff" stroke-width="0.25" text-anchor="start" class="m">93 %</text>
<text x="608.7" y="478.8" font-size="10" fill="#b8b8b8" stroke="#b8b8b8" stroke-width="0.25" text-anchor="start" class="m">Final</text>
<text x="610.3" y="491.5" font-size="10" fill="#0aecff" stroke="#0aecff" stroke-width="0.25" text-anchor="start" class="m">0.0 %</text>
<rect x="461.5" y="473.5" width="4.5" height="4.5" fill="none" stroke="#b8b8b8" stroke-width="1"/>
<rect x="658" y="331" width="115" height="83" fill="#a9a9a9" rx="2.5" />
<rect x="662.5" y="336.5" width="12" height="11" fill="#0aecff" stroke="#555" stroke-width="1"/>
<text x="668.7" y="344.6" font-size="10" fill="#1c1c1c" stroke="#1c1c1c" stroke-width="0.3" text-anchor="middle" >A</text>
<rect x="679.5" y="335.5" width="89.5" height="12.5" fill="#e4e4e4" stroke="#444" stroke-width="1"/>
<text x="681.2" y="344.6" font-size="10" fill="#1c1c1c" stroke="#1c1c1c" stroke-width="0.25" text-anchor="start"  textLength="77.5" lengthAdjust="spacing">LP Switched Res</text>
<path d="M760 339 H767 L763.5 344.2 Z" stroke="none" stroke-width="1" fill="#1c1c1c" />
<path d="M679.69 389.21 A17.1 17.1 0 1 1 704.87 382.70" stroke="#0aecff" stroke-width="2.6" fill="none" />
<path d="M704.00 384.26 A17.1 17.1 0 0 1 699.31 389.21" stroke="#262626" stroke-width="2.6" fill="none" />
<path d="M692.57 376.70 L704.87 382.70" stroke="#262626" stroke-width="1.8" fill="none" />
<text x="689.5" y="402.8" font-size="10" fill="#1c1c1c" stroke="#1c1c1c" stroke-width="0.25" text-anchor="middle" class="m">10.0 kHz</text>
<text x="742.8" y="362" font-size="10" fill="#1c1c1c" stroke="#1c1c1c" stroke-width="0.25" text-anchor="middle" class="m">Q</text>
<rect x="723.5" y="365.5" width="38" height="12" fill="#e2e2e2" stroke="#333" stroke-width="1"/>
<rect x="724" y="366" width="25" height="11" fill="#00cbe0" />
<text x="742.8" y="375.5" font-size="10" fill="#1c1c1c" stroke="#1c1c1c" stroke-width="0.25" text-anchor="middle" class="m">66.4</text>
<text x="742.8" y="390.5" font-size="10" fill="#1c1c1c" stroke="#1c1c1c" stroke-width="0.25" text-anchor="middle" class="m">Lofi</text>
<rect x="723.5" y="394.5" width="38" height="12" fill="#e2e2e2" stroke="#333" stroke-width="1"/>
<rect x="724" y="395" width="19" height="11" fill="#00cbe0" />
<text x="742.8" y="404.5" font-size="10" fill="#1c1c1c" stroke="#1c1c1c" stroke-width="0.25" text-anchor="middle" class="m">50.8</text>
<rect x="658" y="416" width="115" height="84" fill="#a9a9a9" rx="2.5" />
<rect x="662.5" y="421.5" width="12" height="11" fill="#ffb700" stroke="#555" stroke-width="1"/>
<text x="668.7" y="429.6" font-size="10" fill="#1c1c1c" stroke="#1c1c1c" stroke-width="0.3" text-anchor="middle" >B</text>
<rect x="679.5" y="420.5" width="89.5" height="12.5" fill="#e4e4e4" stroke="#444" stroke-width="1"/>
<text x="681.2" y="429.6" font-size="10" fill="#1c1c1c" stroke="#1c1c1c" stroke-width="0.25" text-anchor="start"  textLength="77.5" lengthAdjust="spacing">LP Switched Res</text>
<path d="M760 424 H767 L763.5 429.2 Z" stroke="none" stroke-width="1" fill="#1c1c1c" />
<path d="M679.69 475.01 A17.1 17.1 0 0 1 692.47 444.16" stroke="#ffb700" stroke-width="2.6" fill="none" />
<path d="M694.21 444.56 A17.1 17.1 0 0 1 699.31 475.01" stroke="#262626" stroke-width="2.6" fill="none" />
<path d="M690.09 457.63 L692.47 444.16" stroke="#262626" stroke-width="1.8" fill="none" />
<text x="689.5" y="488.6" font-size="10" fill="#1c1c1c" stroke="#1c1c1c" stroke-width="0.25" text-anchor="middle" class="m">890 Hz</text>
<text x="742.8" y="447.8" font-size="10" fill="#1c1c1c" stroke="#1c1c1c" stroke-width="0.25" text-anchor="middle" class="m">Q</text>
<rect x="723.5" y="451.3" width="38" height="12" fill="#e2e2e2" stroke="#333" stroke-width="1"/>
<rect x="724" y="451.8" width="25" height="11" fill="#ffb700" />
<text x="742.8" y="461.3" font-size="10" fill="#1c1c1c" stroke="#1c1c1c" stroke-width="0.25" text-anchor="middle" class="m">66.4</text>
<text x="742.8" y="477.40000000000003" font-size="10" fill="#1c1c1c" stroke="#1c1c1c" stroke-width="0.25" text-anchor="middle" class="m">Lofi</text>
<rect x="723.5" y="480.3" width="38" height="12" fill="#e2e2e2" stroke="#333" stroke-width="1"/>
<rect x="724" y="480.8" width="17.700000000000045" height="11" fill="#ffb700" />
<text x="742.8" y="490.3" font-size="10" fill="#1c1c1c" stroke="#1c1c1c" stroke-width="0.25" text-anchor="middle" class="m">49.2</text>
<rect x="775" y="331" width="82.5" height="83" fill="#a9a9a9" rx="2.5" />
<rect x="779.5" y="335.5" width="36" height="12" fill="#e2e2e2" stroke="#444" stroke-width="1"/>
<rect x="797.5" y="336" width="4.5" height="11" fill="#00cbe0" />
<text x="797.5" y="345.2" font-size="10" fill="#1c1c1c" stroke="#1c1c1c" stroke-width="0.25" text-anchor="middle" class="m">13R</text>
<text x="797.7" y="364.8" font-size="10" fill="#1c1c1c" stroke="#1c1c1c" stroke-width="0.25" text-anchor="middle"  textLength="22.2" lengthAdjust="spacing">Tone</text>
<path d="M793.5 368 H801.5 L797.5 372.5 Z" stroke="none" stroke-width="1" fill="#0aecff" />
<path d="M789.36 395.05 A12.2 12.2 0 0 1 797.20 373.50" stroke="#262626" stroke-width="2.5" fill="none" />
<path d="M800.56 373.97 A12.2 12.2 0 0 1 805.04 395.05" stroke="#262626" stroke-width="2.5" fill="none" />
<path d="M797.2 386.7 L798.98 373.02" stroke="#262626" stroke-width="1.8" fill="none" />
<text x="796.5" y="407" font-size="10" fill="#1c1c1c" stroke="#1c1c1c" stroke-width="0.25" text-anchor="middle" class="m">0.05</text>
<rect x="832" y="336" width="4" height="60" fill="#0aecff" />
<rect x="837" y="336" width="4" height="60" fill="#0aecff" />
<rect x="832" y="336" width="4" height="18" fill="#262626" />
<rect x="837" y="336" width="4" height="15" fill="#262626" />
<path d="M851 350.7 V360.7 L843 355.7 Z" stroke="#333" stroke-width="1.1" fill="none" />
<text x="837" y="407" font-size="10" fill="#1c1c1c" stroke="#1c1c1c" stroke-width="0.25" text-anchor="middle" class="m">0.2 dB</text>
<rect x="775" y="416" width="82.5" height="84" fill="#a9a9a9" rx="2.5" />
<rect x="779.5" y="420.5" width="36" height="12" fill="#e2e2e2" stroke="#444" stroke-width="1"/>
<rect x="797.5" y="421" width="4.5" height="11" fill="#ffb700" />
<text x="797.5" y="430.2" font-size="10" fill="#1c1c1c" stroke="#1c1c1c" stroke-width="0.25" text-anchor="middle" class="m">13R</text>
<text x="797.7" y="450.8" font-size="10" fill="#1c1c1c" stroke="#1c1c1c" stroke-width="0.25" text-anchor="middle"  textLength="22.2" lengthAdjust="spacing">Tone</text>
<path d="M793.5 454 H801.5 L797.5 458.5 Z" stroke="none" stroke-width="1" fill="#ffb700" />
<path d="M789.36 481.05 A12.2 12.2 0 0 1 795.50 459.62" stroke="#262626" stroke-width="2.5" fill="none" />
<path d="M798.90 459.62 A12.2 12.2 0 0 1 805.04 481.05" stroke="#262626" stroke-width="2.5" fill="none" />
<path d="M797.2 472.7 L797.20 458.90" stroke="#262626" stroke-width="1.8" fill="none" />
<text x="796.5" y="493" font-size="10" fill="#1c1c1c" stroke="#1c1c1c" stroke-width="0.25" text-anchor="middle" class="m">-0.02</text>
<rect x="832" y="421" width="4" height="61" fill="#ffb700" />
<rect x="837" y="421" width="4" height="61" fill="#ffb700" />
<rect x="832" y="421" width="4" height="25.69999999999999" fill="#262626" />
<rect x="837" y="421" width="4" height="22.69999999999999" fill="#262626" />
<path d="M851 450 V460 L843 455 Z" stroke="#333" stroke-width="1.1" fill="none" />
<text x="837" y="493" font-size="10" fill="#1c1c1c" stroke="#1c1c1c" stroke-width="0.25" text-anchor="middle" class="m">-17 dB</text>
<rect x="860" y="331" width="57" height="169" fill="#a9a9a9" rx="2.5" />
<rect x="864.5" y="335.5" width="48" height="12" fill="#0aecff" stroke="#444" stroke-width="1"/>
<text x="888.5" y="345.3" font-size="10" fill="#1c1c1c" stroke="#1c1c1c" stroke-width="0.25" text-anchor="middle" class="m">Poly</text>
<rect x="864.5" y="351.5" width="48" height="12" fill="#e2e2e2" stroke="#444" stroke-width="1"/>
<text x="866" y="361.3" font-size="9.6" fill="#1c1c1c" stroke="#1c1c1c" stroke-width="0.3" text-anchor="start" >8</text>
<path d="M902.5 355.5 H909.5 L906 360.8 Z" stroke="none" stroke-width="1" fill="#1c1c1c" />
<text x="864.5" y="377.3" font-size="10" fill="#1c1c1c" stroke="#1c1c1c" stroke-width="0.3" text-anchor="start"  textLength="33.5" lengthAdjust="spacing">Spread</text>
<rect x="864.5" y="380.5" width="48" height="12" fill="#e2e2e2" stroke="#444" stroke-width="1"/>
<rect x="865" y="381" width="19" height="11" fill="#00cbe0" />
<text x="888.5" y="390.5" font-size="10" fill="#1c1c1c" stroke="#1c1c1c" stroke-width="0.25" text-anchor="middle" class="m">40 %</text>
<text x="864.5" y="406.5" font-size="10" fill="#1c1c1c" stroke="#1c1c1c" stroke-width="0.3" text-anchor="start"  textLength="32.5" lengthAdjust="spacing">Unison</text>
<rect x="864.5" y="409.5" width="48" height="12" fill="#e2e2e2" stroke="#444" stroke-width="1"/>
<text x="866" y="419.3" font-size="9.6" fill="#1c1c1c" stroke="#1c1c1c" stroke-width="0.3" text-anchor="start" >2</text>
<path d="M902.5 413.5 H909.5 L906 418.8 Z" stroke="none" stroke-width="1" fill="#1c1c1c" />
<rect x="863.5" y="426" width="50" height="1" fill="#8a8a8a" />
<text x="865" y="439.3" font-size="10" fill="#1c1c1c" stroke="#1c1c1c" stroke-width="0.25" text-anchor="start" class="m">Drive</text>
<rect x="864.5" y="442.5" width="48" height="12" fill="#e2e2e2" stroke="#444" stroke-width="1"/>
<rect x="865" y="443" width="14" height="11" fill="#00cbe0" />
<text x="888.5" y="452.5" font-size="10" fill="#1c1c1c" stroke="#1c1c1c" stroke-width="0.25" text-anchor="middle" class="m">30 %</text>
<text x="865.5" y="469" font-size="10" fill="#1c1c1c" stroke="#1c1c1c" stroke-width="0.25" text-anchor="start" class="m">Volume</text>
<path d="M874.50 491.90 A8.8 8.8 0 0 1 867.57 477.68" stroke="#0aecff" stroke-width="2.3" fill="none" />
<path d="M868.06 477.10 A8.8 8.8 0 0 1 883.30 483.10" stroke="#262626" stroke-width="2.3" fill="none" />
<path d="M874.15 482.83 L867.57 477.68" stroke="#262626" stroke-width="2.0" fill="none" />
<text x="911.5" y="494.5" font-size="10" fill="#1c1c1c" stroke="#1c1c1c" stroke-width="0.25" text-anchor="end" class="m">-6.0 dB</text>
</svg>
</body></html>
